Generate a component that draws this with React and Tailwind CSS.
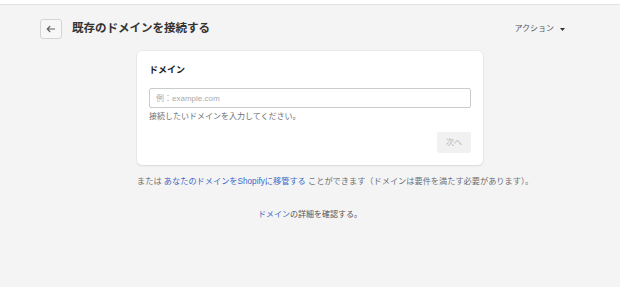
export default function App() {
  return (
    <div
      className="min-h-[287px] bg-[#f4f4f4] text-[#212b36]"
      style={{ fontFamily: '"Liberation Sans", "Noto Sans CJK JP", sans-serif' }}
    >
      <div className="h-[5px] bg-white border-b border-[#e3e3e3]" />

      <div className="flex items-center justify-between pl-[40px] pr-[55px] mt-[14px] h-[20px]">
        <div className="flex items-center">
          <button className="flex items-center justify-center w-[22px] h-[20px] rounded-[3px] border border-[#d4d4d4] bg-[#f7f7f7] text-[#5c5f62]">
            <svg width="10" height="8" viewBox="0 0 10 8" fill="none" stroke="currentColor" strokeWidth="1.1">
              <path d="M9 4H1.5M4.2 1L1.2 4l3 3" />
            </svg>
          </button>
          <h1 className="ml-[10px] text-[11.5px] font-bold text-[#333]">既存のドメインを接続する</h1>
        </div>
        <button className="flex items-center gap-[6px] text-[8px] text-[#555]">
          アクション
          <svg width="5" height="3" viewBox="0 0 5 3" fill="#333">
            <path d="M0 0h5L2.5 3z" />
          </svg>
        </button>
      </div>

      <div className="w-[346px] mx-auto mt-[12px]">
        <div className="bg-white rounded-[5px] shadow-[0_0_0_1px_rgba(63,63,68,0.04),0_1px_2px_rgba(63,63,68,0.1)] px-[12px] pt-[13px] pb-[12px]">
          <h2 className="text-[9px] font-bold leading-[13px] text-[#222]">ドメイン</h2>
          <input
            className="mt-[11px] block w-[322px] h-[20px] rounded-[2px] border border-[#c9cccf] px-[6px] text-[8px] outline-none placeholder:text-[#aaa]"
            placeholder="例：example.com"
          />
          <p className="mt-[3px] text-[8px] leading-[12px] text-[#6d7175]">接続したいドメインを入力してください。</p>
          <div className="flex justify-end mt-[9px]">
            <button className="w-[34px] h-[21px] rounded-[2px] bg-[#f1f1f1] text-[8px] text-[#b5b5b5]">次へ</button>
          </div>
        </div>

        <p className="mt-[11px] whitespace-nowrap text-[8.2px] leading-[12px] text-[#6d7175]">
          または <span className="text-[#3b69c7]">あなたのドメインをShopifyに移管する</span> ことができます（ドメインは要件を満たす必要があります）。
        </p>
      </div>

      <p className="mt-[21px] text-center text-[8px] leading-[12px] text-[#555]">
        <span className="text-[#3b69c7]">ドメイン</span>の詳細を確認する。
      </p>
    </div>
  )
}
